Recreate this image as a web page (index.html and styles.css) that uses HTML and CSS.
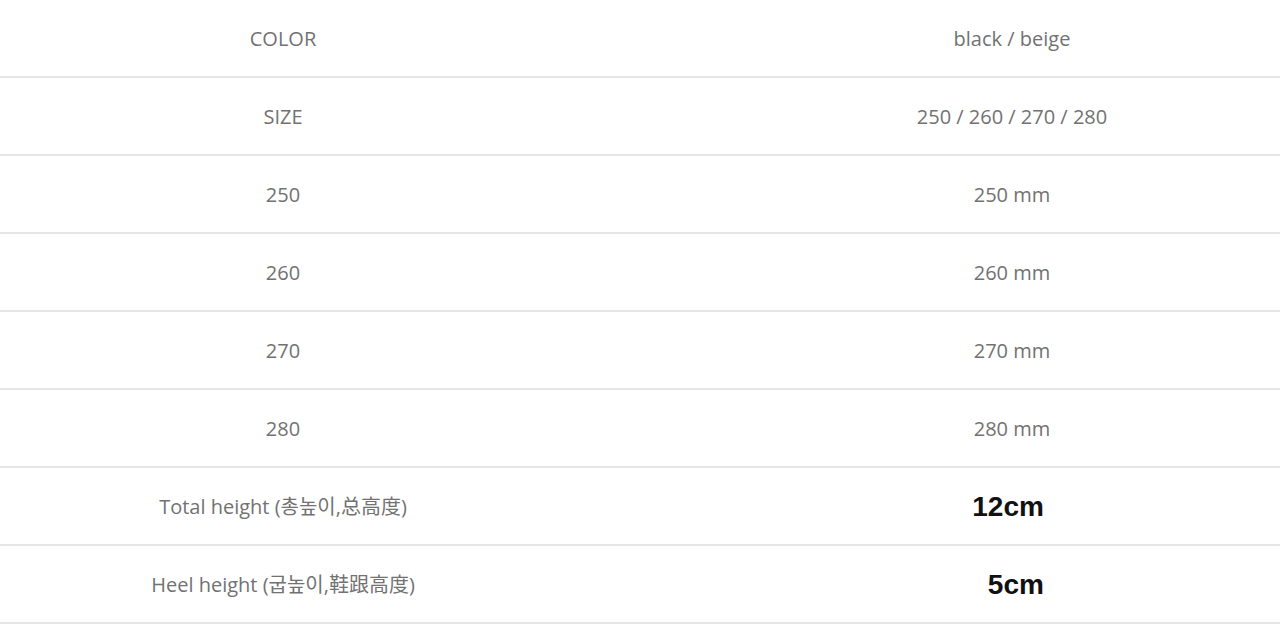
FILE: index.html
```html
<!DOCTYPE html>
<html lang="ko">
<head>
    <meta charset="UTF-8">
    <meta name="viewport" content="width=device-width, initial-scale=1.0">
    <title>Product Info</title>
    <link rel="stylesheet" href="styles.css">
</head>
<body>
    <table class="spec">
        <tr><td class="label">COLOR</td><td class="value">black / beige</td></tr>
        <tr><td class="label">SIZE</td><td class="value">250 / 260 / 270 / 280</td></tr>
        <tr><td class="label">250</td><td class="value">250 mm</td></tr>
        <tr><td class="label">260</td><td class="value">260 mm</td></tr>
        <tr><td class="label">270</td><td class="value">270 mm</td></tr>
        <tr><td class="label">280</td><td class="value">280 mm</td></tr>
        <tr><td class="label">Total height (총높이,总高度)</td><td class="value strong">12cm&nbsp;</td></tr>
        <tr><td class="label">Heel height (굽높이,鞋跟高度)</td><td class="value strong">&nbsp;5cm</td></tr>
    </table>
</body>
</html>
```

FILE: styles.css
```css
body {
    margin: 0;
    background: #fff;
    overflow: hidden;
    font-family: "Open Sans", "Noto Sans CJK KR", sans-serif;
}
.spec {
    width: 1280px;
    border-collapse: collapse;
    table-layout: fixed;
}
.spec td {
    height: 75px;
    padding: 1px 0 0;
    border-bottom: 2px solid #e6e6e6;
    text-align: center;
    vertical-align: middle;
    color: #727272;
    font-size: 20px;
    line-height: 1;
}
.label {
    width: 566px;
}
.value {
    padding-left: 178px !important;
}
.strong {
    font-family: "Liberation Sans", Arial, sans-serif;
    font-weight: bold;
    font-size: 28px !important;
    color: #111 !important;
}
```
